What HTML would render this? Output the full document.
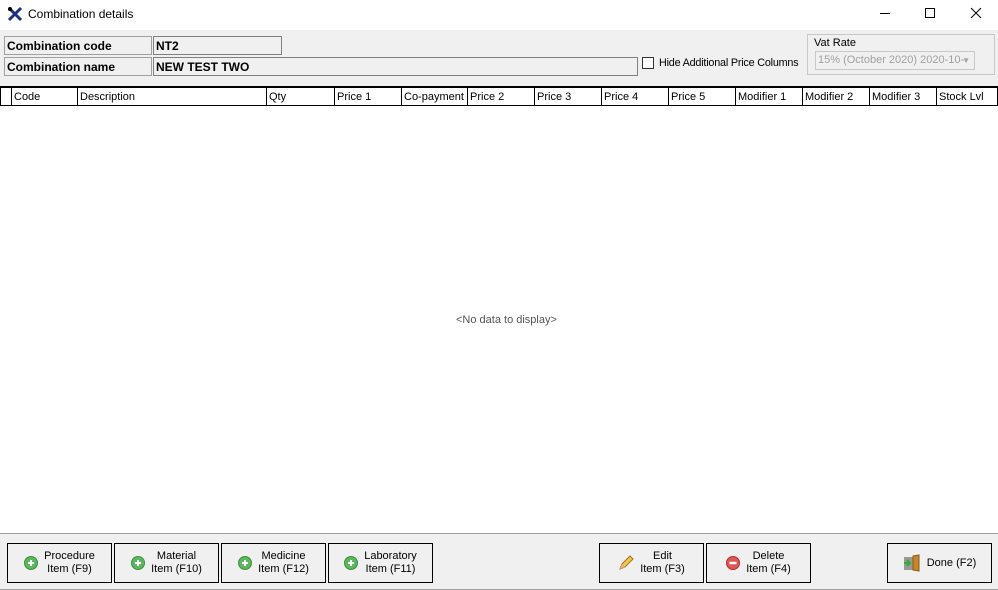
<!DOCTYPE html>
<html><head><meta charset="utf-8"><style>
*{box-sizing:border-box;margin:0;padding:0}
body{width:998px;height:590px;position:relative;background:#fff;font-family:"Liberation Sans",sans-serif;font-size:11px;color:#000;overflow:hidden}
.a{position:absolute}
.title{left:0;top:0;width:998px;height:30px;background:#fff}
.panel{left:0;top:30px;width:998px;height:56px;background:#f0f0f0}
.lbl{background:#f0f0f0;border:1px solid #a0a0a0;font-weight:bold;font-size:12px;padding:2px 0 0 2px;height:19px}
.hdr{left:0;top:86px;width:998px;height:20px;border-top:2px solid #000;border-bottom:1px solid #000;background:#fff}
.hdr div{position:absolute;top:0;height:17px;border-left:1px solid #000;padding:3px 0 0 2px;font-size:11px;white-space:nowrap;overflow:hidden}
.bot{left:0;top:533px;width:998px;height:57px;background:#f0f0f0;border-top:1px solid #a0a0a0;border-bottom:1px solid #a0a0a0}
.btn{position:absolute;top:543px;height:40px;border:1px solid #000;background:#f0f0f0;font-size:11px;line-height:13px;display:flex;align-items:center;justify-content:center;text-align:center}
.btn svg{margin-right:6px}
</style></head><body>
<div class="a title"></div>
<svg class="a" style="left:7px;top:6px" width="16" height="16" viewBox="0 0 16 16"><path d="M2 2 L14 14 M14 2 L2 14" stroke="#1a2f8a" stroke-width="3"/><circle cx="3" cy="3" r="2" fill="#000"/></svg>
<div class="a" style="left:28px;top:7px;font-size:12px">Combination details</div>
<svg class="a" style="left:870px;top:6px" width="120" height="16"><path d="M10 7.5h10" stroke="#000"/><rect x="55.5" y="2.5" width="9" height="9" fill="none" stroke="#000"/><path d="M101 2l10 10M111 2l-10 10" stroke="#000"/></svg>
<div class="a panel"></div>
<div class="a lbl" style="left:4px;top:36px;width:148px">Combination code</div>
<div class="a lbl" style="left:153px;top:36px;width:129px;border-color:#808080">NT2</div>
<div class="a lbl" style="left:4px;top:57px;width:148px">Combination name</div>
<div class="a lbl" style="left:153px;top:57px;width:485px;border-color:#808080">NEW TEST TWO</div>
<div class="a" style="left:642px;top:57px;width:12px;height:12px;border:1px solid #333;background:#fff"></div>
<div class="a" style="left:659px;top:57px;font-size:10.8px;letter-spacing:-0.2px">Hide Additional Price Columns</div>
<div class="a" style="left:807px;top:34px;width:188px;height:41px;border:1px solid #c8c8c8"></div>
<div class="a" style="left:814px;top:37px;font-size:11px">Vat Rate</div>
<div class="a" style="left:815px;top:51px;width:160px;height:19px;border:1px solid #c8c8c8;color:#a0a0a0;font-size:11px;padding:2px 0 0 2px;white-space:nowrap;overflow:hidden">15% (October 2020) 2020-10-<span style="position:absolute;right:4px;top:4px;font-size:8px">▼</span></div>
<div class="a hdr">
<div style="left:11px;width:66px">Code</div>
<div style="left:77px;width:189px">Description</div>
<div style="left:266px;width:68px">Qty</div>
<div style="left:334px;width:67px">Price 1</div>
<div style="left:401px;width:66px">Co-payment</div>
<div style="left:467px;width:67px">Price 2</div>
<div style="left:534px;width:67px">Price 3</div>
<div style="left:601px;width:67px">Price 4</div>
<div style="left:668px;width:67px">Price 5</div>
<div style="left:735px;width:67px">Modifier 1</div>
<div style="left:802px;width:67px">Modifier 2</div>
<div style="left:869px;width:67px">Modifier 3</div>
<div style="left:936px;width:62px;border-right:1px solid #000">Stock Lvl</div>
</div>
<div class="a" style="left:0;top:86px;width:1px;height:20px;background:#000"></div>
<div class="a" style="left:456px;top:314px;font-size:11px;color:#555">&lt;No data to display&gt;</div>
<div class="a bot"></div>
<div class="btn" style="left:7px;width:105px"><svg width="14" height="14"><circle cx="7" cy="7" r="6.5" fill="#5cb85c" stroke="#3e8e3e"/><path d="M7 4v6M4 7h6" stroke="#fff" stroke-width="2"/></svg><span>Procedure<br>Item (F9)</span></div>
<div class="btn" style="left:114px;width:105px"><svg width="14" height="14"><circle cx="7" cy="7" r="6.5" fill="#5cb85c" stroke="#3e8e3e"/><path d="M7 4v6M4 7h6" stroke="#fff" stroke-width="2"/></svg><span>Material<br>Item (F10)</span></div>
<div class="btn" style="left:221px;width:105px"><svg width="14" height="14"><circle cx="7" cy="7" r="6.5" fill="#5cb85c" stroke="#3e8e3e"/><path d="M7 4v6M4 7h6" stroke="#fff" stroke-width="2"/></svg><span>Medicine<br>Item (F12)</span></div>
<div class="btn" style="left:328px;width:105px"><svg width="14" height="14"><circle cx="7" cy="7" r="6.5" fill="#5cb85c" stroke="#3e8e3e"/><path d="M7 4v6M4 7h6" stroke="#fff" stroke-width="2"/></svg><span>Laboratory<br>Item (F11)</span></div>
<div class="btn" style="left:599px;width:105px"><svg width="16" height="16"><path d="M2 14l2-5 8-8 3 3-8 8z" fill="#f2c84b" stroke="#a07020"/><path d="M2 14l2-5 3 3z" fill="#e8b080"/></svg><span>Edit<br>Item (F3)</span></div>
<div class="btn" style="left:706px;width:105px"><svg width="14" height="14"><circle cx="7" cy="7" r="6.5" fill="#e05555" stroke="#b03030"/><path d="M3.5 7h7" stroke="#fff" stroke-width="2.5"/></svg><span>Delete<br>Item (F4)</span></div>
<div class="btn" style="left:887px;width:105px"><svg width="18" height="18"><rect x="1" y="3" width="9" height="13" fill="#999"/><path d="M10 2l6-1v16l-6-1z" fill="#c8862a" stroke="#8a5a10"/><path d="M1 9h5M4 6l3 3-3 3" stroke="#3a3" stroke-width="2" fill="none"/></svg><span>Done (F2)</span></div>
</body></html>
